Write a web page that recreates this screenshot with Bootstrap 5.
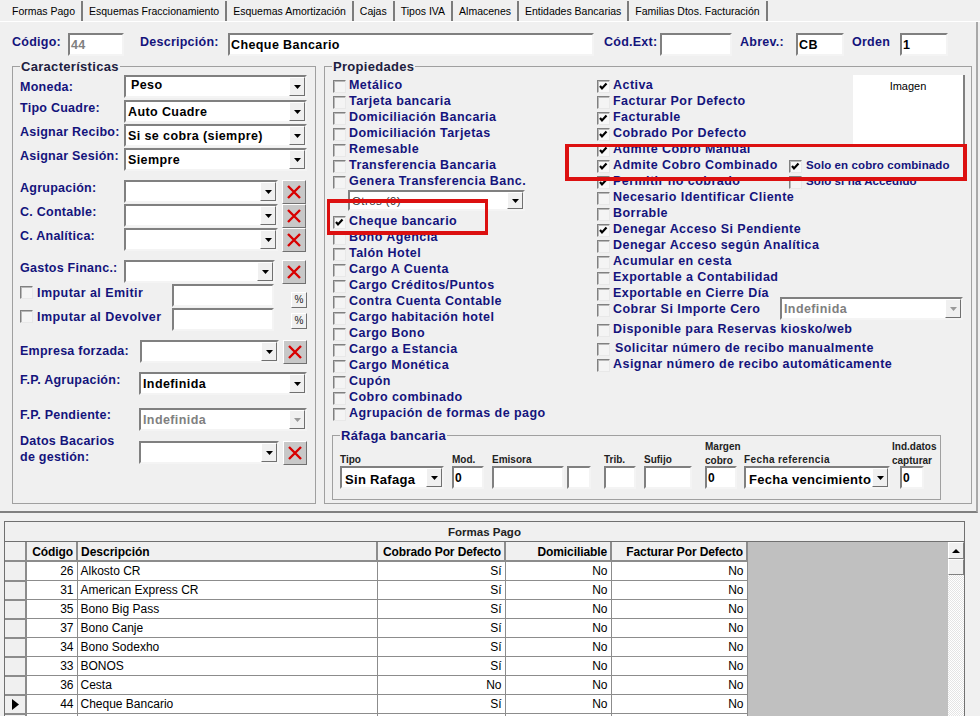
<!DOCTYPE html>
<html lang="es"><head><meta charset="utf-8"><title>Formas Pago</title>
<link href="https://cdn.jsdelivr.net/npm/bootstrap@5.3.0/dist/css/bootstrap.min.css" rel="stylesheet">
<style>
html,body{height:716px;overflow:hidden}
body{background:#f0f0f0;font-family:"Liberation Sans",Arial,sans-serif;font-size:13px;color:#000;position:relative}
.wintabs{height:22px;border-bottom:1px solid #fff;padding-left:6px;flex-wrap:nowrap}
.wintab{font-size:10.5px;height:20px;margin-top:1px;border-right:2px solid #7c7c7c;color:#000;padding:4px 6px 0 6px;white-space:nowrap;line-height:13px}
.panel{height:491px;border-bottom:2px solid #808080;border-right:2px solid #a8a8a8;margin-right:2px;padding:11px 0 0 12px}
.lbl{color:#14147c;font-weight:700;font-size:12.5px;letter-spacing:.25px;white-space:nowrap;line-height:15px}
.topbar .lbl{padding-top:2px}
.field{background:#fff;border:2px solid;border-color:#808080 #f4f4f4 #f4f4f4 #808080;height:23px;font-weight:700;font-size:12.5px;letter-spacing:.4px;padding:3px 0 0 1px;line-height:15px;white-space:nowrap;overflow:hidden}
.g1{width:56px}.g2{width:366px}.g3{width:72px}.g4{width:48px}
.dim{color:#808080}
.topbar{height:23px;margin-bottom:10px}
.frame{border:1px solid #a0a0a0;position:relative;height:438px}
.legendx{position:absolute;top:-8px;left:7px;background:#f0f0f0;padding:0 1px;font-weight:700;font-size:13px;line-height:15px;color:#202040;letter-spacing:.3px}
.leftf{width:304px;padding:8px 8px 0 7px;margin-right:8px}
.rightf{width:648px;padding:11px 0 0 8px}
.combo{background:#fff;border:2px solid;border-color:#808080 #f4f4f4 #f4f4f4 #808080;height:23px;position:relative;font-weight:700;font-size:12.5px;letter-spacing:.4px;line-height:15px;padding:3px 18px 0 2px;white-space:nowrap;overflow:hidden;flex:none}
.combo::after{content:"";position:absolute;right:0;top:0;bottom:0;width:16px;background:#f0f0f0 url("data:image/svg+xml,%3Csvg xmlns='http://www.w3.org/2000/svg' width='7' height='4'%3E%3Cpath d='M0 0h7L3.5 4z' fill='%23000'/%3E%3C/svg%3E") center no-repeat;border:1px solid;border-color:#fff #707070 #707070 #fff}
.combo.off{color:#808080}.combo.off::after{background-image:url("data:image/svg+xml,%3Csvg xmlns='http://www.w3.org/2000/svg' width='7' height='4'%3E%3Cpath d='M0 0h7L3.5 4z' fill='%23999'/%3E%3C/svg%3E")}
.peso{padding-left:5px;padding-top:1px}
.rw{display:flex;align-items:flex-start}
.rw .lbl{padding-top:1px}
.rw .lbl.l-moneda{padding-top:5px}
.rw .lbl.l-emp{padding-top:4px}
.rw .lbl.l-fpa{padding-top:1px}
.rw .lbl.l-fpp{padding-top:0}
.w104{width:104px}.w120{width:120px}
.xbtn{width:24px;height:24px;background:#c8c8c8;border:1px solid;border-color:#fff #707070 #707070 #fff;display:flex;align-items:center;justify-content:center;flex:none;padding:0}
.pct{width:16px;height:16px;background:#f0f0f0;border:1px solid;border-color:#fff #707070 #707070 #fff;font-size:10px;line-height:13px;text-align:center;flex:none;color:#222}
.chk{appearance:none;-webkit-appearance:none;width:13px;height:13px;margin:0;flex:none;background:#f4f4f4;border:1px solid;border-color:#808080 #e8e8e8 #e8e8e8 #808080;box-shadow:inset 1px 1px 0 #b8b8b8;display:block}
.chk:checked{background:#f8f8f8 url("data:image/svg+xml,%3Csvg xmlns='http://www.w3.org/2000/svg' width='11' height='11'%3E%3Cpath d='M2 5l2 2.4L8.5 2.5' fill='none' stroke='%23000' stroke-width='2.2'/%3E%3C/svg%3E") center no-repeat}
.ck{height:16px;display:flex;align-items:center;gap:3px;overflow:hidden;white-space:nowrap}
.ck .lbl{line-height:16px;letter-spacing:.45px}
.ck.imp{gap:4px;flex:none;width:152px}
.colA .lbl,.colB .lbl{margin-top:-2px}
.colA,.colB{font-size:13px}
.colA{width:264px;flex:none}
.colB{flex:1;min-width:0}
.img-box{width:112px;height:71px;margin:-3px 6px -4px auto;background:#fff;border:solid #808080;border-width:0 2px 2px 0;text-align:center;font-size:11px;padding-top:5px;line-height:13px}
.ck .sub{color:#14147c;font-weight:700;font-size:11.5px;letter-spacing:.1px}
.raf{border:1px solid #a0a0a0;width:609px;height:65px;position:relative;margin:13px 0 0 -1px;padding:19px 0 0 7px}
.raf .legendx{color:#14147c;top:-8px;left:7px}
.tiny{font-size:10px;font-weight:700;color:#222;line-height:14px;height:28px;display:flex;align-items:flex-end;white-space:nowrap;margin-bottom:-2px}
.tiny.one{padding-bottom:1px}
.mini{height:23px;background:#fff;border:2px solid;border-color:#808080 #f4f4f4 #f4f4f4 #808080;font-weight:700;font-size:12px;line-height:15px;padding:3px 0 0 1px}
.rafrow{margin-top:-15px}
.big{font-size:13px;font-weight:700;padding-left:3px;padding-top:4px;letter-spacing:.3px}
.gridwrap{position:absolute;left:4px;top:521px;width:961px;border:1px solid #707070;border-bottom:0;height:195px;overflow:hidden}
.gridtitle{height:20px;text-align:center;font-weight:700;font-size:11.5px;line-height:21px;border-bottom:1px solid #707070;color:#222}
.gridbody{height:174px}
.gtable{width:742px;table-layout:fixed;margin:0;font-size:12px;background:#fff;border-collapse:collapse;flex:none}
.gtable th{background:#f0f0f0;font-weight:700;height:19px;padding:2px 3px 0 3px;border:1px solid #8c8c8c;border-width:0 2px 2px 0;line-height:16px;white-space:nowrap;font-size:12px}
.gtable th.text-end{letter-spacing:-.1px}
.gtable td{height:19px;padding:1px 3px 0 3px;border:1px solid #8c8c8c;border-width:0 1px 1px 0;line-height:17px;white-space:nowrap;font-size:12px}
.gtable .ind{background:#f0f0f0;padding:0;border-right-width:2px;border-bottom-width:2px}
.c1{width:21px}.c2{width:51px}.c3{width:300px}.c4{width:128px}.c5{width:106px}.c6{width:136px}
.filler{background:#c0c0c0;flex:1}
.vscroll{width:16px;flex:none;background:conic-gradient(#fff 25%,#e4e4e4 0 50%,#fff 0 75%,#e4e4e4 0) 0 0/2px 2px;display:flex;flex-direction:column}
.vbtn{height:17px;background:#f0f0f0;border:1px solid;border-color:#fff #808080 #808080 #fff;display:flex;align-items:center;justify-content:center}
.vthumb{height:16px;background:#f0f0f0;border:1px solid;border-color:#fff #808080 #808080 #fff}
.mark1,.mark2{position:absolute;border:solid #dc1010;pointer-events:none}
.mark1{left:565px;top:144px;width:402px;height:37px;border-width:3px 4px 4px 4px}
.mark2{left:327px;top:199px;width:161px;height:36px;border-width:4px 3px 4px 3px}
</style></head><body>
<div class="nav wintabs">
<div class="wintab">Formas Pago</div><div class="wintab">Esquemas Fraccionamiento</div><div class="wintab">Esquemas Amortización</div><div class="wintab">Cajas</div><div class="wintab">Tipos IVA</div><div class="wintab">Almacenes</div><div class="wintab">Entidades Bancarias</div><div class="wintab">Familias Dtos. Facturación</div>
</div>
<div class="panel">
<div class="d-flex topbar">
<span class="lbl" style="width:56px">Código:</span><div class="field g1 dim">44</div>
<span class="lbl ms-3" style="width:88px">Descripción:</span><div class="field g2">Cheque Bancario</div>
<span class="lbl" style="width:56px;margin-left:10px">Cód.Ext:</span><div class="field g3"></div>
<span class="lbl ms-2" style="width:56px">Abrev.:</span><div class="field g4">CB</div>
<span class="lbl ms-2" style="width:48px">Orden</span><div class="field g4">1</div>
</div>
<div class="d-flex">
<div class="frame leftf">
<div class="legendx">Características</div>
<div class="rw"><span class="lbl w104 l-moneda">Moneda:</span><div class="combo peso" style="width:183px">Peso</div></div>
<div class="rw" style="margin-top:2px"><span class="lbl w104">Tipo Cuadre:</span><div class="combo" style="width:183px">Auto Cuadre</div></div>
<div class="rw" style="margin-top:1px"><span class="lbl w104">Asignar Recibo:</span><div class="combo" style="width:183px">Si se cobra (siempre)</div></div>
<div class="rw" style="margin-top:1px"><span class="lbl w104">Asignar Sesión:</span><div class="combo" style="width:183px">Siempre</div></div>
<div class="rw" style="margin-top:9px"><span class="lbl w104">Agrupación:</span><div class="combo" style="width:154px"></div><button class="xbtn ms-1"><svg width="16" height="16"><path d="M2 2L14 14M14 2L2 14" stroke="#d80000" stroke-width="2.4"/></svg></button></div>
<div class="rw"><span class="lbl w104">C. Contable:</span><div class="combo" style="width:154px"></div><button class="xbtn ms-1"><svg width="16" height="16"><path d="M2 2L14 14M14 2L2 14" stroke="#d80000" stroke-width="2.4"/></svg></button></div>
<div class="rw"><span class="lbl w104">C. Analítica:</span><div class="combo" style="width:154px"></div><button class="xbtn ms-1"><svg width="16" height="16"><path d="M2 2L14 14M14 2L2 14" stroke="#d80000" stroke-width="2.4"/></svg></button></div>
<div class="rw" style="margin-top:8px"><span class="lbl w104">Gastos Financ.:</span><div class="combo" style="width:151px"></div><button class="xbtn" style="margin-left:7px"><svg width="16" height="16"><path d="M2 2L14 14M14 2L2 14" stroke="#d80000" stroke-width="2.4"/></svg></button></div>
<div class="rw" style="height:24px"><div class="ck imp"><input type="checkbox" class="chk"><span class="lbl">Imputar al Emitir</span></div><div class="field" style="width:103px"></div><div class="pct" style="margin:8px 0 0 17px">%</div></div>
<div class="rw" style="height:24px"><div class="ck imp"><input type="checkbox" class="chk"><span class="lbl">Imputar al Devolver</span></div><div class="field" style="width:103px"></div><div class="pct" style="margin:5px 0 0 17px">%</div></div>
<div class="rw" style="margin-top:8px"><span class="lbl w120 l-emp">Empresa forzada:</span><div class="combo" style="width:139px"></div><button class="xbtn ms-1"><svg width="16" height="16"><path d="M2 2L14 14M14 2L2 14" stroke="#d80000" stroke-width="2.4"/></svg></button></div>
<div class="rw" style="margin-top:8px"><span class="lbl w120 l-fpa">F.P. Agrupación:</span><div class="combo" style="width:168px">Indefinida</div></div>
<div class="rw" style="margin-top:13px"><span class="lbl w120 l-fpp">F.P. Pendiente:</span><div class="combo off" style="width:168px">Indefinida</div></div>
<div class="rw" style="margin-top:10px"><span class="lbl w120" style="padding-top:0;margin-top:-8px;line-height:16px">Datos Bacarios<br>de gestión:</span><div class="combo" style="width:140px"></div><button class="xbtn ms-1"><svg width="16" height="16"><path d="M2 2L14 14M14 2L2 14" stroke="#d80000" stroke-width="2.4"/></svg></button></div>
</div>
<div class="frame rightf">
<div class="legendx">Propiedades</div>
<div class="d-flex">
<div class="colA">
<div class="ck"><input type="checkbox" class="chk"><span class="lbl">Metálico</span></div>
<div class="ck"><input type="checkbox" class="chk"><span class="lbl">Tarjeta bancaria</span></div>
<div class="ck"><input type="checkbox" class="chk"><span class="lbl">Domiciliación Bancaria</span></div>
<div class="ck"><input type="checkbox" class="chk"><span class="lbl">Domiciliación Tarjetas</span></div>
<div class="ck"><input type="checkbox" class="chk"><span class="lbl">Remesable</span></div>
<div class="ck"><input type="checkbox" class="chk"><span class="lbl">Transferencia Bancaria</span></div>
<div class="ck"><input type="checkbox" class="chk"><span class="lbl">Genera Transferencia Banc.</span></div>
<div class="combo" style="width:177px;height:21px;margin:0 0 3px 15px;font-weight:400;font-size:11.5px;padding:3px 0 0 2px;line-height:13px;color:#333">Otros (9)</div>
<div class="ck"><input type="checkbox" class="chk" checked><span class="lbl">Cheque bancario</span></div>
<div class="ck"><input type="checkbox" class="chk"><span class="lbl">Bono Agencia</span></div>
<div class="ck"><input type="checkbox" class="chk"><span class="lbl">Talón Hotel</span></div>
<div class="ck"><input type="checkbox" class="chk"><span class="lbl">Cargo A Cuenta</span></div>
<div class="ck"><input type="checkbox" class="chk"><span class="lbl">Cargo Créditos/Puntos</span></div>
<div class="ck"><input type="checkbox" class="chk"><span class="lbl">Contra Cuenta Contable</span></div>
<div class="ck"><input type="checkbox" class="chk"><span class="lbl">Cargo habitación hotel</span></div>
<div class="ck"><input type="checkbox" class="chk"><span class="lbl">Cargo Bono</span></div>
<div class="ck"><input type="checkbox" class="chk"><span class="lbl">Cargo a Estancia</span></div>
<div class="ck"><input type="checkbox" class="chk"><span class="lbl">Cargo Monética</span></div>
<div class="ck"><input type="checkbox" class="chk"><span class="lbl">Cupón</span></div>
<div class="ck"><input type="checkbox" class="chk"><span class="lbl">Cobro combinado</span></div>
<div class="ck"><input type="checkbox" class="chk"><span class="lbl">Agrupación de formas de pago</span></div>
</div>
<div class="colB">
<div class="d-flex">
<div>
<div class="ck"><input type="checkbox" class="chk" checked><span class="lbl">Activa</span></div>
<div class="ck"><input type="checkbox" class="chk"><span class="lbl">Facturar Por Defecto</span></div>
<div class="ck"><input type="checkbox" class="chk" checked><span class="lbl">Facturable</span></div>
<div class="ck"><input type="checkbox" class="chk" checked><span class="lbl">Cobrado Por Defecto</span></div>
</div>
<div class="img-box">Imagen</div>
</div>
<div class="ck"><input type="checkbox" class="chk" checked><span class="lbl">Admite Cobro Manual</span></div>
<div class="d-flex"><div class="ck" style="width:192px"><input type="checkbox" class="chk" checked><span class="lbl">Admite Cobro Combinado</span></div><div class="ck" style="gap:4px"><input type="checkbox" class="chk" checked><span class="lbl sub">Solo en cobro combinado</span></div></div>
<div class="d-flex"><div class="ck" style="width:192px"><input type="checkbox" class="chk" checked><span class="lbl">Permitir no cobrado</span></div><div class="ck" style="gap:4px"><input type="checkbox" class="chk"><span class="lbl sub">Solo si ha Accedido</span></div></div>
<div class="ck"><input type="checkbox" class="chk"><span class="lbl">Necesario Identificar Cliente</span></div>
<div class="ck"><input type="checkbox" class="chk"><span class="lbl">Borrable</span></div>
<div class="ck"><input type="checkbox" class="chk" checked><span class="lbl">Denegar Acceso Si Pendiente</span></div>
<div class="ck"><input type="checkbox" class="chk"><span class="lbl">Denegar Acceso según Analítica</span></div>
<div class="ck"><input type="checkbox" class="chk"><span class="lbl">Acumular en cesta</span></div>
<div class="ck"><input type="checkbox" class="chk"><span class="lbl">Exportable a Contabilidad</span></div>
<div class="ck"><input type="checkbox" class="chk"><span class="lbl">Exportable en Cierre Día</span></div>
<div class="d-flex align-items-start" style="height:20px"><div class="ck" style="width:183px"><input type="checkbox" class="chk"><span class="lbl">Cobrar Si Importe Cero</span></div><div class="combo off" style="width:183px;margin-top:-5px">Indefinida</div></div>
<div class="ck"><input type="checkbox" class="chk"><span class="lbl">Disponible para Reservas kiosko/web</span></div>
<div class="ck" style="margin-top:3px;gap:5px"><input type="checkbox" class="chk"><span class="lbl">Solicitar número de recibo manualmente</span></div>
<div class="ck"><input type="checkbox" class="chk"><span class="lbl">Asignar número de recibo automáticamente</span></div>
</div>
</div>
<div class="raf">
<div class="legendx">Ráfaga bancaria</div>
<div class="d-flex rafrow">
<div style="width:112px"><div class="tiny one">Tipo</div><div class="combo big" style="width:104px">Sin Rafaga</div></div>
<div style="width:40px"><div class="tiny one">Mod.</div><div class="mini" style="width:32px">0</div></div>
<div style="width:75px"><div class="tiny one">Emisora</div><div class="mini" style="width:72px"></div></div>
<div style="width:37px"><div class="tiny one">&nbsp;</div><div class="mini" style="width:24px"></div></div>
<div style="width:40px"><div class="tiny one">Trib.</div><div class="mini" style="width:32px"></div></div>
<div style="width:61px"><div class="tiny one">Sufijo</div><div class="mini" style="width:48px"></div></div>
<div style="width:39px"><div class="tiny">Margen<br>cobro</div><div class="mini" style="width:32px">0</div></div>
<div style="width:148px"><div class="tiny one" style="letter-spacing:.4px">Fecha referencia</div><div class="combo big" style="width:146px">Fecha vencimiento</div></div>
<div><div class="tiny">Ind.datos<br>capturar</div><div class="mini" style="width:24px;margin-left:8px">0</div></div>
</div>
</div>
</div>
</div>
</div>
<div class="gridwrap">
<div class="gridtitle">Formas Pago</div>
<div class="d-flex gridbody">
<table class="gtable">
<colgroup><col class="c1"><col class="c2"><col class="c3"><col class="c4"><col class="c5"><col class="c6"></colgroup>
<thead><tr><th></th><th class="text-end">Código</th><th>Descripción</th><th class="text-end">Cobrado Por Defecto</th><th class="text-end">Domiciliable</th><th class="text-end">Facturar Por Defecto</th></tr></thead>
<tbody>
<tr><td class="ind"></td><td class="text-end">26</td><td>Alkosto CR</td><td class="text-end">Sí</td><td class="text-end">No</td><td class="text-end">No</td></tr>
<tr><td class="ind"></td><td class="text-end">31</td><td>American Express CR</td><td class="text-end">Sí</td><td class="text-end">No</td><td class="text-end">No</td></tr>
<tr><td class="ind"></td><td class="text-end">35</td><td>Bono Big Pass</td><td class="text-end">Sí</td><td class="text-end">No</td><td class="text-end">No</td></tr>
<tr><td class="ind"></td><td class="text-end">37</td><td>Bono Canje</td><td class="text-end">Sí</td><td class="text-end">No</td><td class="text-end">No</td></tr>
<tr><td class="ind"></td><td class="text-end">34</td><td>Bono Sodexho</td><td class="text-end">Sí</td><td class="text-end">No</td><td class="text-end">No</td></tr>
<tr><td class="ind"></td><td class="text-end">33</td><td>BONOS</td><td class="text-end">Sí</td><td class="text-end">No</td><td class="text-end">No</td></tr>
<tr><td class="ind"></td><td class="text-end">36</td><td>Cesta</td><td class="text-end">No</td><td class="text-end">No</td><td class="text-end">No</td></tr>
<tr><td class="ind text-center"><svg width="7" height="11" class="d-block mx-auto"><path d="M0 0l7 5.5L0 11z" fill="#000"/></svg></td><td class="text-end">44</td><td>Cheque Bancario</td><td class="text-end">Sí</td><td class="text-end">No</td><td class="text-end">No</td></tr>
<tr><td class="ind"></td><td></td><td></td><td></td><td></td><td></td></tr>
</tbody></table>
<div class="filler"></div>
<div class="vscroll"><div class="vbtn"><svg width="8" height="4"><path d="M0 4h8L4 0z" fill="#000"/></svg></div><div class="vthumb"></div></div>
</div>
</div>
<div class="mark1"></div><div class="mark2"></div>
</body></html>
